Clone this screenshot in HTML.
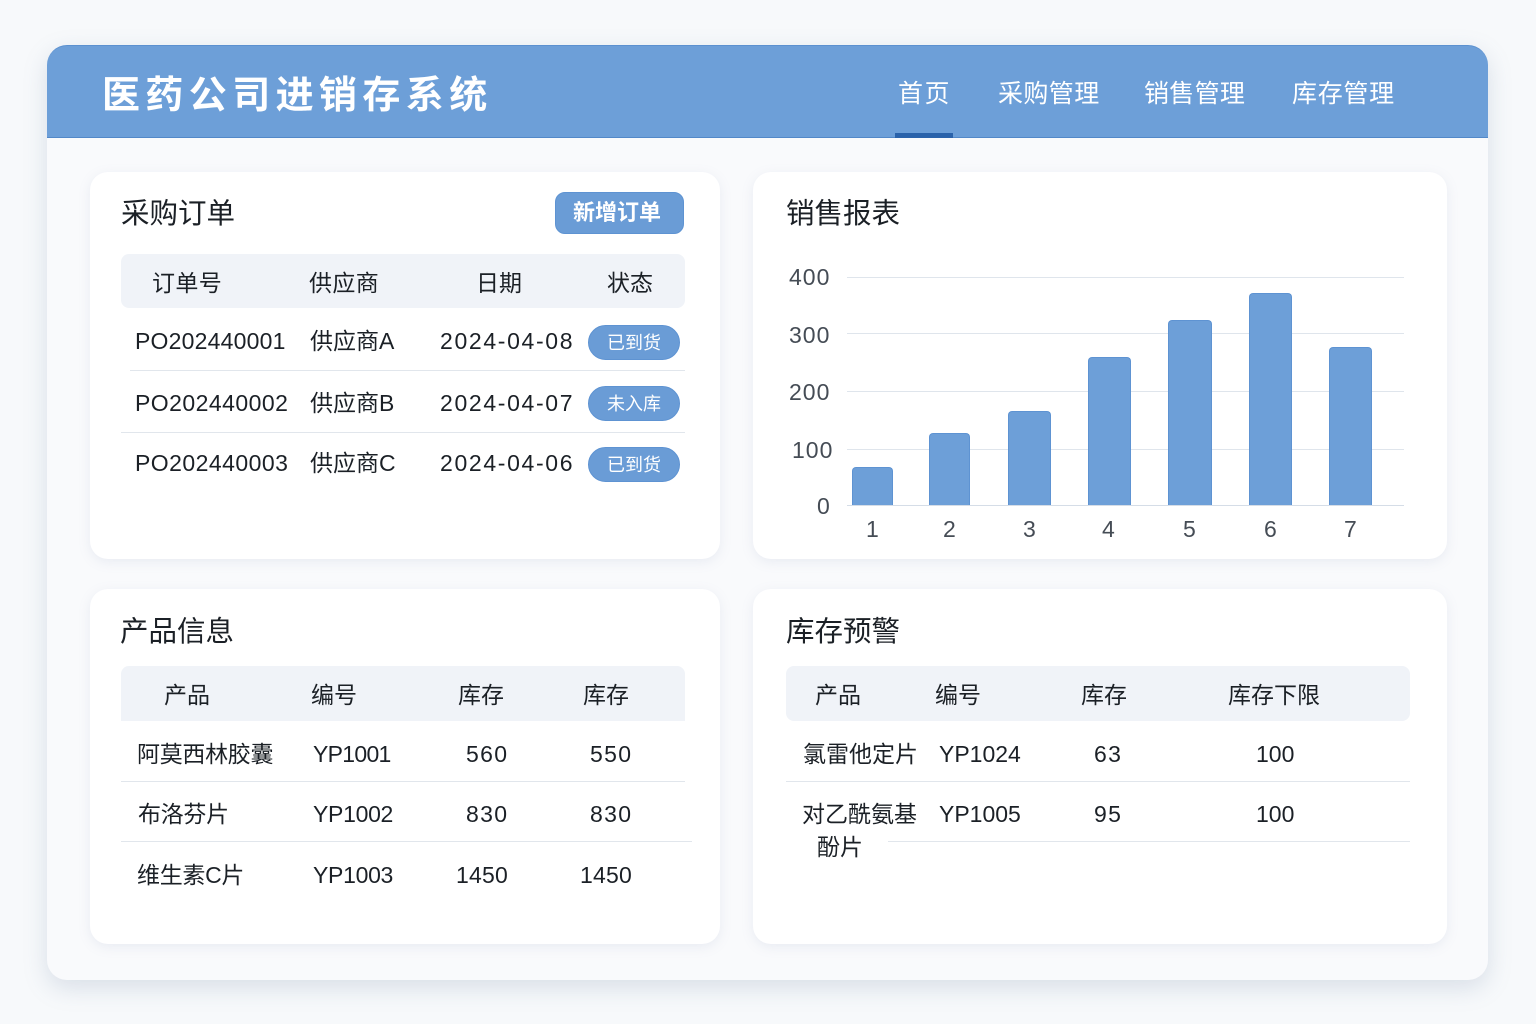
<!DOCTYPE html>
<html lang="zh-CN">
<head>
<meta charset="utf-8">
<title>医药公司进销存系统</title>
<style>
html,body{margin:0;padding:0}
body{width:1536px;height:1024px;overflow:hidden;background:#f7f9fb;position:relative;font-family:"Liberation Sans","Noto Sans CJK SC",sans-serif;color:#1b2026}
div{position:absolute;box-sizing:border-box}
.t{white-space:nowrap;line-height:30px;height:30px;font-size:23px}
.w{color:#fff}
.shell{left:47px;top:45px;width:1441px;height:935px;background:#f9fafc;border-radius:20px;box-shadow:0 8px 24px rgba(110,130,165,.22)}
.hdr{left:47px;top:45px;width:1441px;height:93px;background:#6d9fd8;border-radius:20px 20px 0 0;border-top:1px solid #5c91d0;border-bottom:1px solid #5288c8}
.card{background:#fff;border-radius:18px;box-shadow:0 3px 12px rgba(120,140,175,.13)}
.th{background:#f0f3f8;border-radius:8px 8px 0 0}
.ln{height:1px;background:#e1e6ec}
.gl{left:847px;width:557px;height:1px;background:#dfe5ec}
.bar{background:#6d9fd8;border:1px solid #5e93d2;border-bottom:0;border-radius:4px 4px 0 0}
.pill{left:588px;width:92px;height:35px;background:#6a9cd6;border:1px solid #5e93d2;border-radius:18px;color:#fff;font-size:18px;line-height:34px;text-align:center}
.cn{color:#454c55;letter-spacing:1px}
.d{letter-spacing:1.35px}
.dt{letter-spacing:1.65px}
</style>
</head>
<body>
<div class="shell"></div>
<div class="hdr"></div>
<div class="t w" style="left:102px;top:73px;height:46px;line-height:46px;font-size:38px;font-weight:700;letter-spacing:5.4px">医药公司进销存系统</div>
<div class="t w" style="left:898px;top:79px;font-size:25px;letter-spacing:1.5px">首页</div>
<div class="t w" style="left:998px;top:79px;font-size:25px;letter-spacing:.4px">采购管理</div>
<div class="t w" style="left:1144px;top:79px;font-size:25px;letter-spacing:.3px">销售管理</div>
<div class="t w" style="left:1292px;top:79px;font-size:25px;letter-spacing:.7px">库存管理</div>
<div style="left:895px;top:133px;width:58px;height:5px;background:#2a62aa"></div>

<div class="card" style="left:90px;top:172px;width:630px;height:387px"></div>
<div class="card" style="left:753px;top:172px;width:694px;height:387px"></div>
<div class="card" style="left:90px;top:589px;width:630px;height:355px"></div>
<div class="card" style="left:753px;top:589px;width:694px;height:355px"></div>

<!-- 采购订单 -->
<div class="t" style="left:121px;top:197px;font-size:28.5px;height:34px;line-height:34px">采购订单</div>
<div style="left:555px;top:192px;width:129px;height:42px;background:#6a9cd6;border:1px solid #5e93d2;border-radius:10px"></div>
<div class="t w" style="left:573px;top:198px;font-size:22px;font-weight:700">新增订单</div>
<div class="th" style="left:121px;top:254px;width:564px;height:54px;border-radius:8px"></div>
<div class="t" style="left:152px;top:268px;letter-spacing:.4px">订单号</div>
<div class="t" style="left:309px;top:268px;letter-spacing:.4px">供应商</div>
<div class="t" style="left:476px;top:268px">日期</div>
<div class="t" style="left:607px;top:268px">状态</div>
<div class="t" style="left:135px;top:326px;letter-spacing:.2px">PO202440001</div>
<div class="t" style="left:310px;top:326px">供应商A</div>
<div class="t dt" style="left:440px;top:326px">2024-04-08</div>
<div class="pill" style="top:325px">已到货</div>
<div class="ln" style="left:130px;top:370px;width:555px"></div>
<div class="t" style="left:135px;top:388px;letter-spacing:.45px">PO202440002</div>
<div class="t" style="left:310px;top:388px">供应商B</div>
<div class="t dt" style="left:440px;top:388px">2024-04-07</div>
<div class="pill" style="top:386px">未入库</div>
<div class="ln" style="left:121px;top:432px;width:564px"></div>
<div class="t" style="left:135px;top:448px;letter-spacing:.45px">PO202440003</div>
<div class="t" style="left:310px;top:448px">供应商C</div>
<div class="t dt" style="left:440px;top:448px">2024-04-06</div>
<div class="pill" style="top:447px">已到货</div>

<!-- 销售报表 -->
<div class="t" style="left:786px;top:197px;font-size:28.5px;height:34px;line-height:34px">销售报表</div>
<div class="gl" style="top:277px"></div>
<div class="gl" style="top:333px"></div>
<div class="gl" style="top:391px"></div>
<div class="gl" style="top:449px"></div>
<div class="gl" style="top:505px;background:#d5dde7"></div>
<div class="t cn" style="left:789px;top:262px">400</div>
<div class="t cn" style="left:789px;top:320px">300</div>
<div class="t cn" style="left:789px;top:377px">200</div>
<div class="t cn" style="left:792px;top:435px">100</div>
<div class="t cn" style="left:817px;top:491px">0</div>
<div class="bar" style="left:852px;top:467px;width:41px;height:38px"></div>
<div class="bar" style="left:929px;top:433px;width:41px;height:72px"></div>
<div class="bar" style="left:1008px;top:411px;width:43px;height:94px"></div>
<div class="bar" style="left:1088px;top:357px;width:43px;height:148px"></div>
<div class="bar" style="left:1168px;top:320px;width:44px;height:185px"></div>
<div class="bar" style="left:1249px;top:293px;width:43px;height:212px"></div>
<div class="bar" style="left:1329px;top:347px;width:43px;height:158px"></div>
<div class="t cn" style="left:866px;top:514px">1</div>
<div class="t cn" style="left:943px;top:514px">2</div>
<div class="t cn" style="left:1023px;top:514px">3</div>
<div class="t cn" style="left:1102px;top:514px">4</div>
<div class="t cn" style="left:1183px;top:514px">5</div>
<div class="t cn" style="left:1264px;top:514px">6</div>
<div class="t cn" style="left:1344px;top:514px">7</div>

<!-- 产品信息 -->
<div class="t" style="left:120px;top:615px;font-size:28.5px;height:34px;line-height:34px">产品信息</div>
<div class="th" style="left:121px;top:666px;width:564px;height:55px"></div>
<div class="t" style="left:164px;top:680px">产品</div>
<div class="t" style="left:311px;top:680px">编号</div>
<div class="t" style="left:458px;top:680px">库存</div>
<div class="t" style="left:583px;top:680px">库存</div>
<div class="t" style="left:137px;top:739px;letter-spacing:-.3px">阿莫西林胶囊</div>
<div class="t" style="left:313px;top:739px;letter-spacing:-.7px">YP1001</div>
<div class="t d" style="left:466px;top:739px">560</div>
<div class="t d" style="left:590px;top:739px">550</div>
<div class="ln" style="left:121px;top:781px;width:564px"></div>
<div class="t" style="left:138px;top:799px;letter-spacing:-.3px">布洛芬片</div>
<div class="t" style="left:313px;top:799px;letter-spacing:-.3px">YP1002</div>
<div class="t d" style="left:466px;top:799px">830</div>
<div class="t d" style="left:590px;top:799px">830</div>
<div class="ln" style="left:121px;top:841px;width:571px"></div>
<div class="t" style="left:137px;top:860px;letter-spacing:-.3px">维生素C片</div>
<div class="t" style="left:313px;top:860px;letter-spacing:-.3px">YP1003</div>
<div class="t" style="left:456px;top:860px;letter-spacing:.2px">1450</div>
<div class="t" style="left:580px;top:860px;letter-spacing:.2px">1450</div>

<!-- 库存预警 -->
<div class="t" style="left:786px;top:615px;font-size:28.5px;height:34px;line-height:34px">库存预警</div>
<div class="th" style="left:786px;top:666px;width:624px;height:55px;border-radius:8px"></div>
<div class="t" style="left:815px;top:680px">产品</div>
<div class="t" style="left:935px;top:680px">编号</div>
<div class="t" style="left:1081px;top:680px">库存</div>
<div class="t" style="left:1228px;top:680px">库存下限</div>
<div class="t" style="left:803px;top:739px">氯雷他定片</div>
<div class="t" style="left:939px;top:739px">YP1024</div>
<div class="t" style="left:1094px;top:739px;letter-spacing:1.3px">63</div>
<div class="t" style="left:1256px;top:739px">100</div>
<div class="ln" style="left:786px;top:781px;width:624px"></div>
<div class="t" style="left:802px;top:799px">对乙酰氨基</div>
<div class="t" style="left:939px;top:799px">YP1005</div>
<div class="t" style="left:1094px;top:799px;letter-spacing:1.3px">95</div>
<div class="t" style="left:1256px;top:799px">100</div>
<div class="ln" style="left:786px;top:841px;width:624px"></div>
<div style="left:786px;top:832px;width:102px;height:26px;background:#fff"></div>
<div class="t" style="left:817px;top:832px">酚片</div>
</body>
</html>
